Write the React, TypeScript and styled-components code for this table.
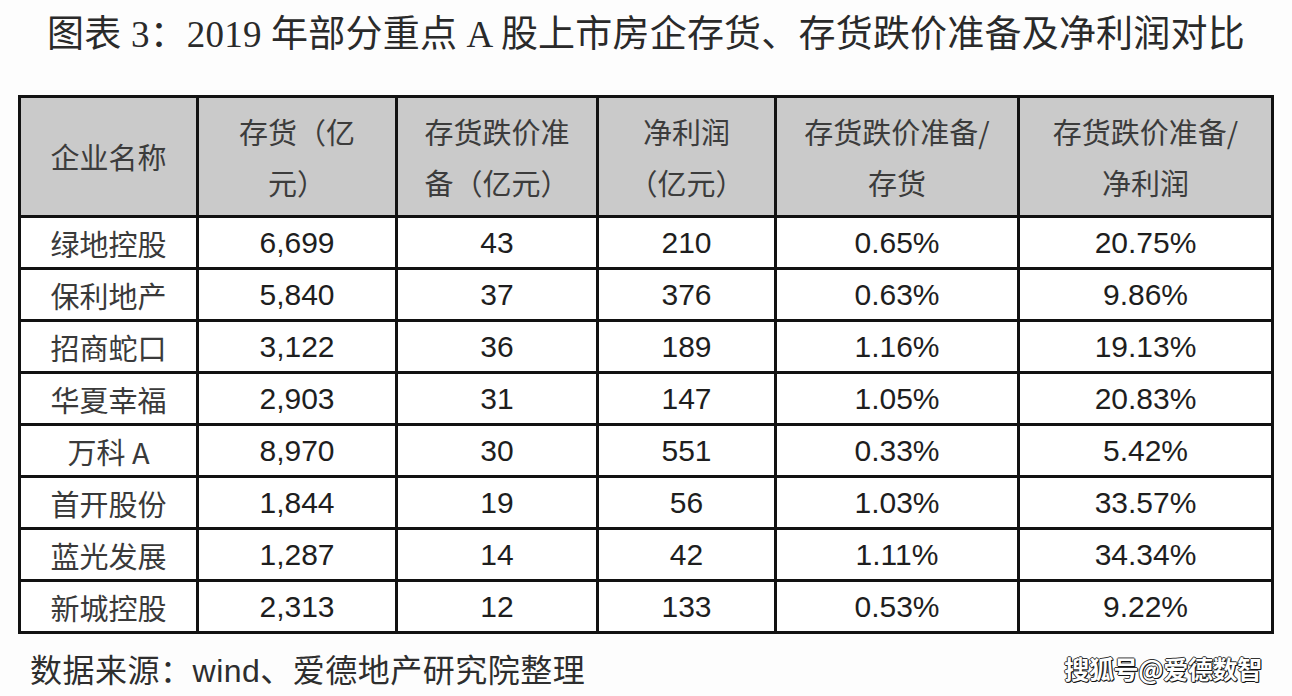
import React from "react";
import styled, { createGlobalStyle } from "styled-components";

const GlobalStyle = createGlobalStyle`
  html, body { margin: 0; padding: 0; background: #fdfdfd; }
  body { font-family: "Liberation Sans", "Noto Sans CJK SC", sans-serif; }
`;

const Page = styled.div`
  width: 1292px;
  height: 696px;
  background: #fdfdfd;
  display: flex;
  flex-direction: column;
  overflow: hidden;
`;

const Title = styled.h1`
  margin: 0;
  height: 70px;
  line-height: 70px;
  text-align: center;
  font-family: "Liberation Serif", "Noto Sans CJK SC", serif;
  font-weight: 400;
  font-size: 37px;
  letter-spacing: 0.2px;
  color: #2a2a2a;
  white-space: nowrap;
`;

const Table = styled.div`
  margin: 25px 0 0 18px;
  display: grid;
  grid-template-columns: 175px 196px 198px 175px 240px 251px;
  grid-auto-rows: 49px;
  grid-template-rows: 117px;
  gap: 3px;
  padding: 3px;
  background: #121212;
  width: max-content;
`;

const HeadCell = styled.div`
  background: #cacaca;
  display: flex;
  flex-direction: column;
  align-items: center;
  justify-content: center;
  font-family: "Noto Sans CJK SC", sans-serif;
  font-size: 29px;
  line-height: 51px;
  color: #3c3c3c;
  white-space: nowrap;
`;

const Cell = styled.div<{ $name?: boolean }>`
  background: #ffffff;
  display: flex;
  align-items: center;
  justify-content: center;
  font-family: ${(p) =>
    p.$name
      ? '"Noto Sans CJK SC", sans-serif'
      : '"Liberation Sans", "Noto Sans CJK SC", sans-serif'};
  font-size: ${(p) => (p.$name ? "29px" : "30px")};
  color: ${(p) => (p.$name ? "#3a3a3a" : "#1e1e1e")};
  white-space: nowrap;
`;

const Footer = styled.div`
  flex: 1;
  display: flex;
  align-items: center;
  justify-content: space-between;
  padding: 6px 30px 0 30px;
`;

const Source = styled.div`
  font-family: "Noto Sans CJK SC", sans-serif;
  font-size: 32px;
  letter-spacing: 0.5px;
  color: #2e2e2e;
  white-space: nowrap;
`;

const Latin = styled.span`
  font-family: "Liberation Sans", sans-serif;
`;

const Watermark = styled.div`
  font-family: "Noto Sans CJK SC", sans-serif;
  font-weight: 700;
  font-size: 25px;
  color: #ffffff;
  letter-spacing: -0.3px;
  text-shadow: 1px 1px 0 #111, -1px 0 0 #333, 0 -1px 0 #333, 1px 0 0 #111, 0 1px 0 #111;
  white-space: nowrap;
`;

const headers: string[][] = [
  ["企业名称"],
  ["存货（亿", "元）"],
  ["存货跌价准", "备（亿元）"],
  ["净利润", "（亿元）"],
  ["存货跌价准备/", "存货"],
  ["存货跌价准备/", "净利润"],
];

const rows: string[][] = [
  ["绿地控股", "6,699", "43", "210", "0.65%", "20.75%"],
  ["保利地产", "5,840", "37", "376", "0.63%", "9.86%"],
  ["招商蛇口", "3,122", "36", "189", "1.16%", "19.13%"],
  ["华夏幸福", "2,903", "31", "147", "1.05%", "20.83%"],
  ["万科 A", "8,970", "30", "551", "0.33%", "5.42%"],
  ["首开股份", "1,844", "19", "56", "1.03%", "33.57%"],
  ["蓝光发展", "1,287", "14", "42", "1.11%", "34.34%"],
  ["新城控股", "2,313", "12", "133", "0.53%", "9.22%"],
];

export default function App() {
  return (
    <>
      <GlobalStyle />
      <Page>
        <Title>图表 3：2019 年部分重点 A 股上市房企存货、存货跌价准备及净利润对比</Title>
        <Table>
          {headers.map((lines, i) => (
            <HeadCell key={`h${i}`}>
              {lines.map((l, j) => (
                <span key={j}>{l}</span>
              ))}
            </HeadCell>
          ))}
          {rows.map((r, ri) =>
            r.map((v, ci) => (
              <Cell key={`${ri}-${ci}`} $name={ci === 0}>
                {v}
              </Cell>
            ))
          )}
        </Table>
        <Footer>
          <Source>
            数据来源：<Latin>wind</Latin>、爱德地产研究院整理
          </Source>
          <Watermark>搜狐号@爱德数智</Watermark>
        </Footer>
      </Page>
    </>
  );
}
